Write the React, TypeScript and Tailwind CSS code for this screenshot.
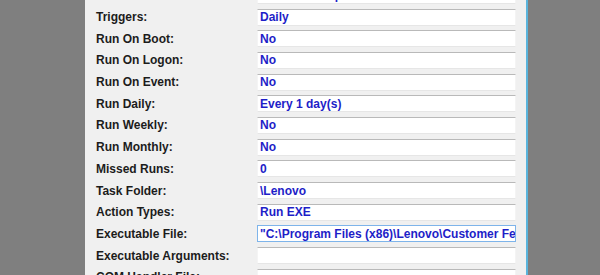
const rows: [string, string][] = [
  ['Task Author:', 'Lenovo Group Limited'],
  ['Triggers:', 'Daily'],
  ['Run On Boot:', 'No'],
  ['Run On Logon:', 'No'],
  ['Run On Event:', 'No'],
  ['Run Daily:', 'Every 1 day(s)'],
  ['Run Weekly:', 'No'],
  ['Run Monthly:', 'No'],
  ['Missed Runs:', '0'],
  ['Task Folder:', '\\Lenovo'],
  ['Action Types:', 'Run EXE'],
  ['Executable File:', '"C:\\Program Files (x86)\\Lenovo\\Customer Feedback Program\\Lenovo.TVT.CustomerFeedback.Agent.exe"'],
  ['Executable Arguments:', ''],
  ['COM Handler File:', ''],
]

export default function App() {
  return (
    <div className="w-[600px] h-[275px] overflow-hidden bg-[#7f7f7f] flex">
      <div className="ml-[85px] w-[443px] h-full bg-[#f0f0f0] border-r-2 border-[#5ab4dc] overflow-hidden">
        <div className="flex flex-col pl-[11px] mt-[-15.5px]" style={{ fontFamily: '"Liberation Sans", Arial, sans-serif' }}>
          {rows.map(([label, value], i) => (
            <div key={i} className="h-[21.7px] flex items-center shrink-0">
              <div className="w-[161px] text-[12px] font-bold text-[#1c1c1c] whitespace-nowrap">{label}</div>
              <div
                className={
                  'w-[259px] h-[17px] bg-white flex items-center pl-[2px] overflow-hidden whitespace-nowrap text-[12px] font-bold text-[#1e1ec8] ' +
                  (label === 'Executable File:'
                    ? 'border border-[#7eb4ea]'
                    : 'border-t border-t-[#b9b9b9] border-x border-x-[#f4f4f4] border-b border-b-[#e6e6e6]')
                }
              >
                {value}
              </div>
            </div>
          ))}
        </div>
      </div>
    </div>
  )
}
